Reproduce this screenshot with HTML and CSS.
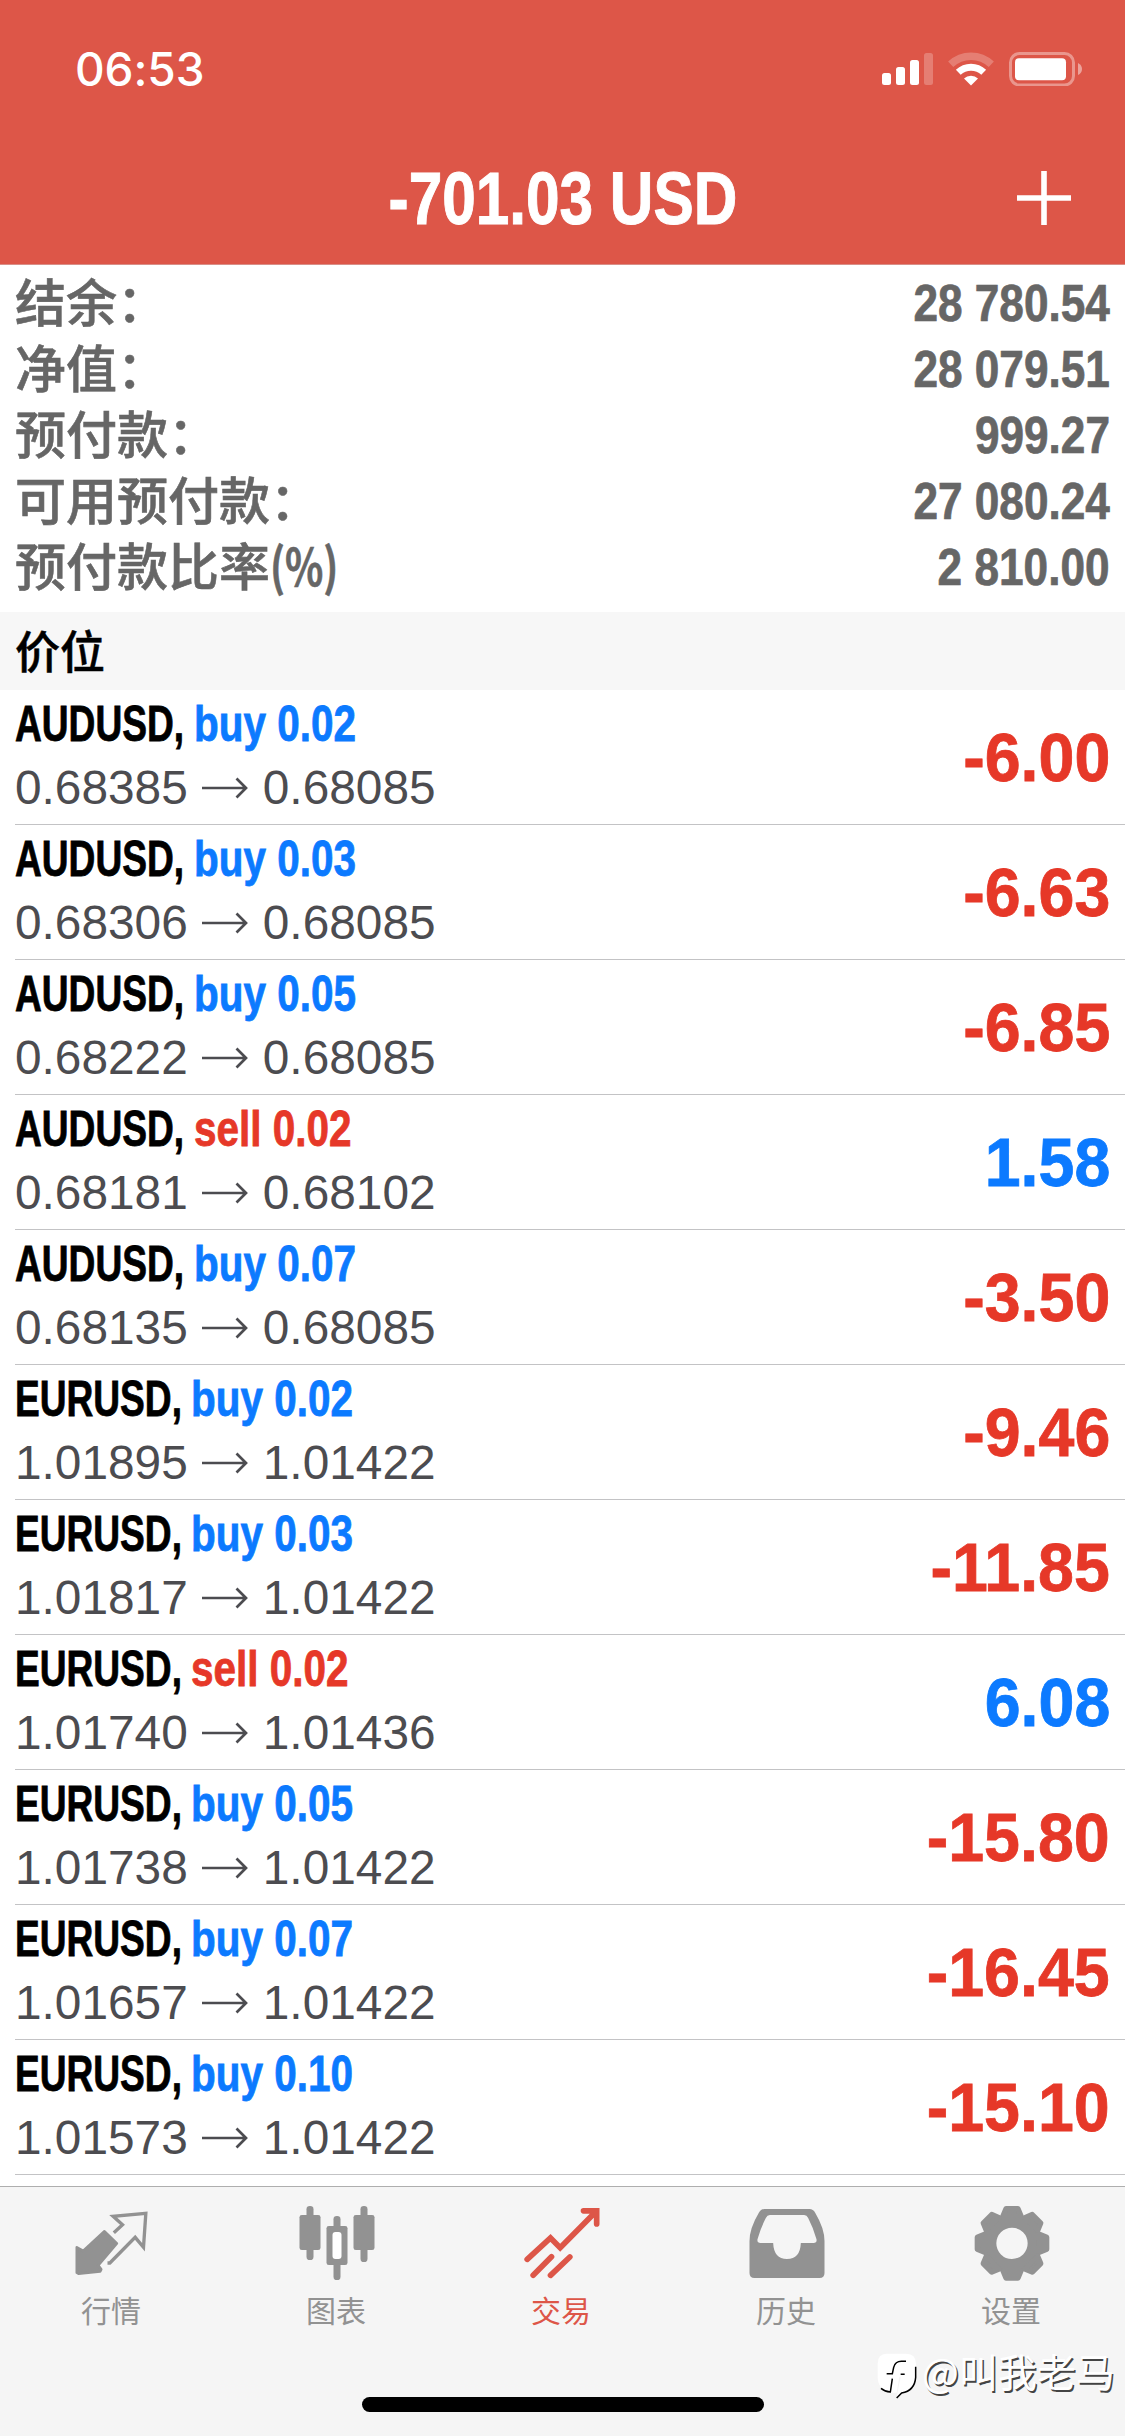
FILE: index.html
```html
<!DOCTYPE html>
<html lang="zh-CN">
<head>
<meta charset="utf-8">
<title>交易</title>
<link rel="stylesheet" href="styles.css">
</head>
<body>
<svg width="0" height="0" class="defs" aria-hidden="true">
  <symbol id="arrow" viewBox="0 0 46 22"><path d="M0 11H44M34.5 1.5L44 11L34.5 20.5" fill="none" stroke="currentColor" stroke-width="2.7"/></symbol>
</svg>
<header class="header">
  <div class="status">
    <span class="time">06:53</span>
    <div class="status-icons">
      <svg width="51" height="34" viewBox="0 0 51 34" fill="#fff">
        <rect x="0" y="21" width="9" height="12" rx="2.5"/>
        <rect x="14" y="15" width="9" height="18" rx="2.5"/>
        <rect x="28" y="8" width="9" height="25" rx="2.5"/>
        <rect x="42" y="1" width="9" height="32" rx="2.5" opacity=".24"/>
      </svg>
      <svg width="46" height="34" viewBox="0 0 46 34">
        <path d="M2.7 12.3A29.5 29.5 0 0 1 43.3 12.3" fill="none" stroke="#fff" stroke-width="7.5" opacity=".24"/>
        <path d="M10.3 20.2A18.5 18.5 0 0 1 35.7 20.2" fill="none" stroke="#fff" stroke-width="7"/>
        <path d="M16 26.5A10 10 0 0 1 30 26.5L23 33.5Z" fill="#fff"/>
      </svg>
      <svg width="74" height="34" viewBox="0 0 74 34">
        <rect x="1.5" y="1.5" width="63" height="31.5" rx="9" fill="none" stroke="#fff" stroke-width="3" opacity=".38"/>
        <rect x="6" y="6.3" width="51" height="22" rx="4" fill="#fff"/>
        <path d="M69 11Q73 13 73 17T69 23Z" fill="#fff" opacity=".45"/>
      </svg>
    </div>
  </div>
  <div class="navbar">
    <h1 class="total"><span class="cond">-701.03 USD</span></h1>
    <svg class="add" width="56" height="56" viewBox="0 0 56 56"><path d="M28 1V55M1 28H55" stroke="#fff" stroke-width="5.6"/></svg>
  </div>
</header>

<dl class="account">
  <div class="line"><dt>结余：</dt><dd>28 780.54</dd></div>
  <div class="line"><dt>净值：</dt><dd>28 079.51</dd></div>
  <div class="line"><dt>预付款：</dt><dd>999.27</dd></div>
  <div class="line"><dt>可用预付款：</dt><dd>27 080.24</dd></div>
  <div class="line"><dt>预付款比率<span class="pct">(%)</span></dt><dd>2 810.00</dd></div>
</dl>

<h2 class="section">价位</h2>

<ul class="positions">
  <li class="position"><div class="info"><div class="deal"><span class="pair">AUDUSD,</span><span class="side buy">buy 0.02</span></div><div class="prices">0.68385<svg class="arrow"><use href="#arrow"/></svg>0.68085</div></div><span class="profit loss">-6.00</span></li>
  <li class="position"><div class="info"><div class="deal"><span class="pair">AUDUSD,</span><span class="side buy">buy 0.03</span></div><div class="prices">0.68306<svg class="arrow"><use href="#arrow"/></svg>0.68085</div></div><span class="profit loss">-6.63</span></li>
  <li class="position"><div class="info"><div class="deal"><span class="pair">AUDUSD,</span><span class="side buy">buy 0.05</span></div><div class="prices">0.68222<svg class="arrow"><use href="#arrow"/></svg>0.68085</div></div><span class="profit loss">-6.85</span></li>
  <li class="position"><div class="info"><div class="deal"><span class="pair">AUDUSD,</span><span class="side sell">sell 0.02</span></div><div class="prices">0.68181<svg class="arrow"><use href="#arrow"/></svg>0.68102</div></div><span class="profit gain">1.58</span></li>
  <li class="position"><div class="info"><div class="deal"><span class="pair">AUDUSD,</span><span class="side buy">buy 0.07</span></div><div class="prices">0.68135<svg class="arrow"><use href="#arrow"/></svg>0.68085</div></div><span class="profit loss">-3.50</span></li>
  <li class="position"><div class="info"><div class="deal"><span class="pair pair-eur">EURUSD,</span><span class="side buy">buy 0.02</span></div><div class="prices">1.01895<svg class="arrow"><use href="#arrow"/></svg>1.01422</div></div><span class="profit loss">-9.46</span></li>
  <li class="position"><div class="info"><div class="deal"><span class="pair pair-eur">EURUSD,</span><span class="side buy">buy 0.03</span></div><div class="prices">1.01817<svg class="arrow"><use href="#arrow"/></svg>1.01422</div></div><span class="profit loss">-11.85</span></li>
  <li class="position"><div class="info"><div class="deal"><span class="pair pair-eur">EURUSD,</span><span class="side sell">sell 0.02</span></div><div class="prices">1.01740<svg class="arrow"><use href="#arrow"/></svg>1.01436</div></div><span class="profit gain">6.08</span></li>
  <li class="position"><div class="info"><div class="deal"><span class="pair pair-eur">EURUSD,</span><span class="side buy">buy 0.05</span></div><div class="prices">1.01738<svg class="arrow"><use href="#arrow"/></svg>1.01422</div></div><span class="profit loss">-15.80</span></li>
  <li class="position"><div class="info"><div class="deal"><span class="pair pair-eur">EURUSD,</span><span class="side buy">buy 0.07</span></div><div class="prices">1.01657<svg class="arrow"><use href="#arrow"/></svg>1.01422</div></div><span class="profit loss">-16.45</span></li>
  <li class="position"><div class="info"><div class="deal"><span class="pair pair-eur">EURUSD,</span><span class="side buy">buy 0.10</span></div><div class="prices">1.01573<svg class="arrow"><use href="#arrow"/></svg>1.01422</div></div><span class="profit loss">-15.10</span></li>
</ul>

<footer class="footer">
  <nav class="tabs">
    <a class="tab">
      <svg width="90" height="80" viewBox="202.5 126 270 240">
        <path d="M229 262L248 273L312 214L349 250L293 316L302 328L299 334L234 341L229 338Z" fill="currentColor" stroke="currentColor" stroke-width="8" stroke-linejoin="round"/>
        <path d="M340 218L366 194L338 169L436 160L429 262L404 232L328 309H321" fill="none" stroke="currentColor" stroke-width="10"/>
      </svg>
      <span>行情</span>
    </a>
    <a class="tab">
      <svg width="90" height="80" viewBox="877.5 126 270 240" fill="currentColor">
        <rect x="918" y="138" width="21" height="162" rx="10"/><rect x="897" y="165" width="63" height="105" rx="7"/>
        <rect x="1080" y="138" width="21" height="168" rx="10"/><rect x="1059" y="165" width="63" height="105" rx="7"/>
        <rect x="999" y="168" width="21" height="50" rx="10"/><rect x="999" y="290" width="21" height="70" rx="10"/>
        <path fill-rule="evenodd" d="M985 198H1034Q1041 198 1041 205V308Q1041 315 1034 315H985Q978 315 978 308V205Q978 198 985 198Z"/>
        <rect x="996" y="216" width="27" height="81" rx="9" fill="#fff"/>
      </svg>
      <span>图表</span>
    </a>
    <a class="tab active">
      <svg width="90" height="80" viewBox="352.5 126 270 240" fill="none" stroke="currentColor" stroke-width="17" stroke-linejoin="round" stroke-linecap="round">
        <path d="M380 298L450 234L479 263L588 153M549 152.5H588.5V192" stroke-linejoin="miter"/>
        <path d="M398 346L453 290M450 346L508 291"/>
      </svg>
      <span>交易</span>
    </a>
    <a class="tab">
      <svg width="90" height="80" viewBox="1027.5 126 270 240" fill="currentColor">
        <path fill-rule="evenodd" d="M1092 147H1227Q1238 147 1244 158Q1272 205 1272 243V339Q1272 354 1257 354H1062Q1047 354 1047 339V243Q1047 205 1075 158Q1081 147 1092 147ZM1108 165Q1100 165 1096 174Q1080 205 1071 238Q1069 249 1080 249H1118Q1120 297 1159.5 297Q1199 297 1201 249H1239Q1250 249 1248 238Q1239 205 1223 174Q1219 165 1211 165Z"/>
      </svg>
      <span>历史</span>
    </a>
    <a class="tab">
      <svg width="90" height="80" viewBox="502.5 126 270 240" fill="currentColor">
        <g transform="translate(634.5 250)">
          <circle r="68" fill="none" stroke="currentColor" stroke-width="42"/>
          <g stroke="currentColor" stroke-width="16" stroke-linejoin="round">
            <path id="tooth" d="M-18 -104H18L27 -82H-27Z"/>
            <use href="#tooth" transform="rotate(45)"/><use href="#tooth" transform="rotate(90)"/><use href="#tooth" transform="rotate(135)"/><use href="#tooth" transform="rotate(180)"/><use href="#tooth" transform="rotate(225)"/><use href="#tooth" transform="rotate(270)"/><use href="#tooth" transform="rotate(315)"/>
          </g>
        </g>
      </svg>
      <span>设置</span>
    </a>
  </nav>
  <div class="home"></div>
  <div class="watermark">
    <svg width="42" height="53" viewBox="21 21 126 159">
      <path d="M50 41H108Q138 41 138 71V102Q138 152 96 158L80 174L84 150L92 112V98H104H94L98 80H60L66 115L60 155Q23 148 23 110V71Q23 41 50 41Z" fill="#fff"/>
      <path d="M60 64H110V110H88L80 158H63L68 112H48V98H58Z" fill="#fff"/>
      <path d="M108 64H94Q76 64 71 82L67 101H50M92 103H104M67 116L61 156Q45 155 33 145M137 80V112Q134 152 95 159L80 174" fill="none" stroke="#000" stroke-width="4.5"/>
    </svg>
    <span>@叫我老马</span>
  </div>
</footer>
</body>
</html>
```
FILE: styles.css
```css
* { box-sizing: border-box; }

body {
  margin: 0;
  width: 1125px;
  height: 2436px;
  display: flex;
  flex-direction: column;
  background: #fff;
  font-family: "Liberation Sans", "Noto Sans CJK SC", sans-serif;
  overflow: hidden;
}

h1, h2, dl, dd, ul { margin: 0; padding: 0; list-style: none; }
svg { display: block; flex: none; }
.defs { position: absolute; }

.header {
  height: 265px;
  flex: none;
  background: #dd5648;
  border-bottom: 1px solid #d98f88;
  color: #fff;
}
.status {
  height: 132px;
  padding: 52px 42px 0 75px;
  display: flex;
  justify-content: space-between;
  align-items: flex-start;
}
.time {
  font: 500 46px/35px Inter, sans-serif;
  letter-spacing: -0.1px;
}
.status-icons { display: flex; }
.status-icons svg + svg { margin-left: 15px; }
.navbar {
  height: 132px;
  display: grid;
  grid-template-columns: 1fr auto 1fr;
  align-items: center;
}
.total {
  grid-column: 2;
  font-size: 74px;
  line-height: 134px;
  white-space: nowrap;
  -webkit-text-stroke: 1px currentColor;
}
.cond { display: block; transform: scaleX(0.815); }
.add { justify-self: end; margin: 0 53px 2px 0; }

.account {
  height: 347px;
  flex: none;
  padding: 6px 15px 0;
  color: #666;
}
.line {
  height: 66px;
  display: flex;
  justify-content: space-between;
  line-height: 66px;
  white-space: nowrap;
}
.line dt {
  font-family: "Noto Sans CJK SC", sans-serif;
  font-weight: 500;
  font-size: 51px;
  line-height: 59px;
  -webkit-text-stroke: 0.6px currentColor;
}
.pct { display: inline-block; font-weight: 700; transform: scaleX(0.78); transform-origin: left; }
.line dd {
  font-size: 51px;
  font-weight: 700;
  transform: scaleX(0.866);
  transform-origin: right;
  -webkit-text-stroke: 0.7px currentColor;
}

.section {
  height: 78px;
  flex: none;
  padding-left: 15px;
  background: #f7f7f7;
  color: #000;
  font: 500 45px/75px "Noto Sans CJK SC", sans-serif;
  -webkit-text-stroke: 0.5px currentColor;
}

.position {
  height: 135px;
  margin-left: 15px;
  padding-right: 15px;
  border-bottom: 1px solid #c3c3c5;
  display: flex;
  justify-content: space-between;
}
.deal {
  display: flex;
  height: 66px;
  font-size: 50px;
  font-weight: 700;
  line-height: 69px;
  white-space: nowrap;
  -webkit-text-stroke: 0.8px currentColor;
}
.pair { width: 179px; color: #000; transform: scaleX(0.742); transform-origin: left; }
.pair-eur { width: 176px; }
.side { transform: scaleX(0.81); transform-origin: left; }
.buy, .gain { color: #0c7aff; }
.sell, .loss { color: #e63828; }
.prices {
  display: flex;
  align-items: center;
  font-size: 47.8px;
  line-height: 64px;
  color: #4c4c50;
}
.arrow { width: 46px; height: 22px; margin: 0 15px 0 14px; }
.profit {
  font-size: 69px;
  font-weight: 700;
  line-height: 136px;
  transform: scaleX(0.935);
  transform-origin: right;
  -webkit-text-stroke: 0.8px currentColor;
}

.footer {
  height: 250px;
  margin-top: 11px;
  flex: none;
  position: relative;
  background: #f5f5f5;
  border-top: 1px solid #aeaeae;
}
.tabs { display: grid; grid-template-columns: repeat(5, 225px); padding-top: 15px; }
.tab {
  display: flex;
  flex-direction: column;
  align-items: center;
  color: #929292;
  font: 400 30px/44px "Noto Sans CJK SC", sans-serif;
}
.tab span { margin: 5px 3px 1px 0; }
.active { color: #dd5648; }
.home { width: 402px; height: 15px; margin: 65px auto 0; border-radius: 8px; background: #000; }
.watermark {
  position: absolute;
  left: 877px;
  top: 160px;
  display: flex;
  gap: 3px;
  color: #fff;
  font: 400 39px/46px "Noto Sans CJK SC", sans-serif;
  text-shadow: 1.5px 1.5px 0 #444;
}
```
